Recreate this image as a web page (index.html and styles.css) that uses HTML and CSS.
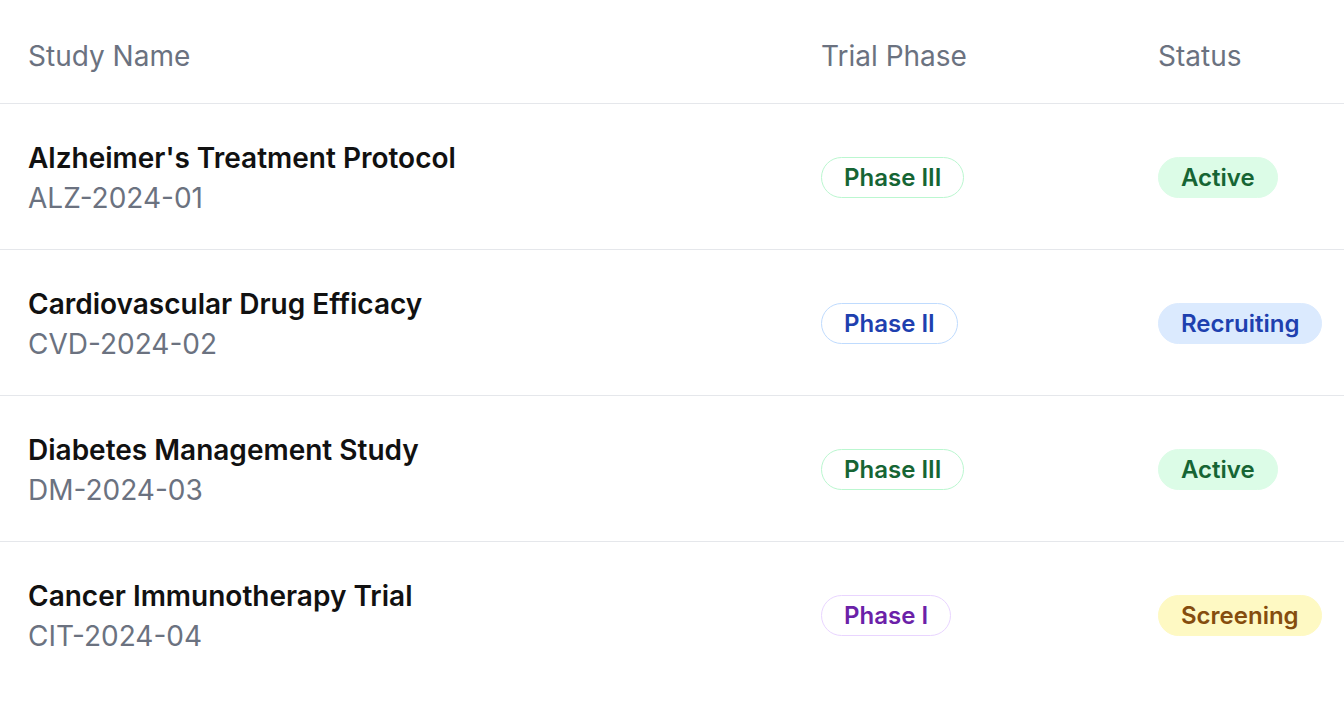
FILE: index.html
```html
<!DOCTYPE html>
<html lang="en">
<head>
<meta charset="utf-8">
<title>Studies</title>
<link rel="stylesheet" href="styles.css">
</head>
<body>
<table class="studies">
  <colgroup>
    <col class="c-name">
    <col class="c-phase">
    <col class="c-status">
  </colgroup>
  <thead>
    <tr>
      <th>Study Name</th>
      <th>Trial Phase</th>
      <th>Status</th>
    </tr>
  </thead>
  <tbody>
    <tr>
      <td class="name-cell">
        <div class="title">Alzheimer's Treatment Protocol</div>
        <div class="code">ALZ-2024-01</div>
      </td>
      <td><span class="badge outline green">Phase III</span></td>
      <td><span class="badge fill green">Active</span></td>
    </tr>
    <tr>
      <td class="name-cell">
        <div class="title">Cardiovascular Drug Efficacy</div>
        <div class="code">CVD-2024-02</div>
      </td>
      <td><span class="badge outline blue">Phase II</span></td>
      <td><span class="badge fill blue">Recruiting</span></td>
    </tr>
    <tr>
      <td class="name-cell">
        <div class="title">Diabetes Management Study</div>
        <div class="code">DM-2024-03</div>
      </td>
      <td><span class="badge outline green">Phase III</span></td>
      <td><span class="badge fill green">Active</span></td>
    </tr>
    <tr>
      <td class="name-cell">
        <div class="title">Cancer Immunotherapy Trial</div>
        <div class="code">CIT-2024-04</div>
      </td>
      <td><span class="badge outline purple">Phase I</span></td>
      <td><span class="badge fill yellow">Screening</span></td>
    </tr>
  </tbody>
</table>
</body>
</html>
```

FILE: styles.css
```css
html, body {
  margin: 0;
  padding: 0;
  background: #ffffff;
  overflow: hidden;
}
body {
  font-family: Inter, "Noto Sans", sans-serif;
  color: #111827;
}
.studies {
  width: 1344px;
  border-collapse: collapse;
  table-layout: fixed;
}
.c-name { width: 793px; }
.c-phase { width: 337px; }
.c-status { width: 214px; }

.studies th {
  text-align: left;
  font-weight: 400;
  font-size: 28px;
  line-height: 40px;
  color: #6b7280;
  padding: 36px 28px 27px;
  border-bottom: 1px solid #e5e7eb;
}
.studies td {
  padding: 33px 28px 32px;
  vertical-align: middle;
  border-bottom: 1px solid #e5e7eb;
  white-space: nowrap;
}
.studies td.name-cell {
  padding-top: 34px;
  padding-bottom: 31px;
}
.studies tbody tr:last-child td {
  border-bottom: none;
}
.title {
  font-size: 28px;
  line-height: 40px;
  font-weight: 600;
  color: #111111;
}
.code {
  font-size: 28px;
  line-height: 40px;
  color: #6b7280;
}
.badge {
  display: inline-block;
  font-size: 24px;
  line-height: 39px;
  font-weight: 600;
  padding: 0 22px;
  border-radius: 999px;
  border: 1px solid transparent;
}
.outline { background: #ffffff; }
.outline.green { border-color: #bbf7d0; color: #166534; }
.outline.blue { border-color: #bfdbfe; color: #1e40af; }
.outline.purple { border-color: #e9d5ff; color: #6b21a8; }
.fill.green { background: #dcfce7; color: #166534; border-color: #dcfce7; }
.fill.blue { background: #dbeafe; color: #1e40af; border-color: #dbeafe; }
.fill.yellow { background: #fef9c3; color: #854d0e; border-color: #fef9c3; }
```
